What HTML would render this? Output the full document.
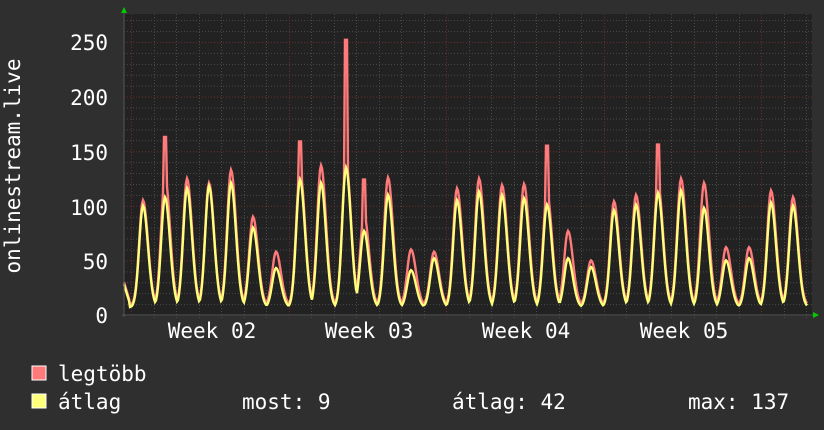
<!DOCTYPE html>
<html><head><meta charset="utf-8"><style>
html,body{margin:0;padding:0;background:#2f2f2f;width:824px;height:430px;overflow:hidden}
svg{display:block}
text{font-family:"DejaVu Sans Mono","Liberation Mono",monospace;fill:#fff}
</style></head><body>
<svg id="g" width="824" height="430" xmlns="http://www.w3.org/2000/svg">
<rect x="0" y="0" width="824" height="430" fill="#2f2f2f"/>
<rect x="124" y="14" width="688" height="302" fill="#222222"/>
<g id="grid"></g>
<g id="data"></g>
<line x1="122" y1="315" x2="814" y2="315" stroke="#555" stroke-width="1"/>
<line x1="124" y1="12" x2="124" y2="317" stroke="#555" stroke-width="1"/>
<polygon points="121,13 127,13 124,7" fill="#0c0"/>
<polygon points="813,312 813,318 819,315" fill="#0c0"/>
<g font-size="21">
<text x="108" y="50" text-anchor="end">250</text>
<text x="108" y="105" text-anchor="end">200</text>
<text x="108" y="160" text-anchor="end">150</text>
<text x="108" y="215" text-anchor="end">100</text>
<text x="108" y="269" text-anchor="end">50</text>
<text x="108" y="323" text-anchor="end">0</text>
<text x="212" y="338" text-anchor="middle">Week 02</text>
<text x="369" y="338" text-anchor="middle">Week 03</text>
<text x="526" y="338" text-anchor="middle">Week 04</text>
<text x="684" y="338" text-anchor="middle">Week 05</text>
<text transform="translate(20,166) rotate(-90)" text-anchor="middle">onlinestream.live</text>
<rect x="32" y="366" width="14" height="14" fill="#ff7b7b" stroke="#fff" stroke-width="1"/>
<rect x="32" y="394" width="14" height="14" fill="#ffff7b" stroke="#fff" stroke-width="1"/>
<text x="58" y="381">legtöbb</text>
<text x="58" y="409">átlag</text>
<text x="242" y="409">most: 9</text>
<text x="452" y="409">átlag: 42</text>
<text x="688" y="409">max: 137</text>
</g>
</svg>
<script>
(function(){
var NS="http://www.w3.org/2000/svg";
var grid=document.getElementById('grid'),data=document.getElementById('data');
function ln(x1,y1,x2,y2,c){var l=document.createElementNS(NS,'line');l.setAttribute('x1',x1);l.setAttribute('y1',y1);l.setAttribute('x2',x2);l.setAttribute('y2',y2);l.setAttribute('stroke',c);l.setAttribute('stroke-width',1);l.setAttribute('stroke-dasharray','1,2');grid.appendChild(l);}
function Y(v){return 315-v*1.092;}
for(var v=10;v<=270;v+=10){if(v%50)ln(124,Y(v)+0.5,812,Y(v)+0.5,'#4a4a4a');}
for(var x=131;x<812;x+=22.5){var d=Math.round((x-131)/22.5);if(d%7)ln(Math.round(x)+0.5,14,Math.round(x)+0.5,318,'#4a4a4a');}
for(var v=50;v<=250;v+=50)ln(124,Y(v)+0.5,812,Y(v)+0.5,'#6b2c2c');
for(var x=131;x<812;x+=157.5)ln(Math.round(x)+0.5,14,Math.round(x)+0.5,318,'#6b2c2c');
var P=[[143,100,103],[165,108,125],[187,116,123],[209,118,119],[231,121,131],[253,80,88],[276,43,56],[300,124,130],[321,121,135],[346,135,138],[364,77,90],[388,110,124],[411,41,58],[434,52,56],[457,105,114],[479,113,123],[502,110,117],[524,107,118],[547,101,110],[568,52,75],[591,44,48],[614,96,102],[636,101,108],[658,112,118],[681,114,123],[704,98,119],[726,50,60],[749,52,60],[771,103,112],[793,100,106]];
var S=[[165,161],[300,157],[346,250],[547,153],[658,154],[364,122]];
function f(x,idx){var m=7+2*Math.sin(x*0.7);for(var i=0;i<P.length;i++){var c=P[i][0],v=P[i][idx];var dx=x-c;var w=dx<0?5.4:7;var val=7+(v-7)*Math.exp(-(dx/w)*(dx/w));if(val>m)m=val;}
if(x<130){m=Math.max(m,28-(x-124)*3);}
if(idx==2){for(var j=0;j<S.length;j++){if(Math.abs(x-S[j][0])<1.2)m=Math.max(m,S[j][1]);}m+=2;}
return m;}
function path(idx,col){var d='';for(var x=124;x<=807;x+=1){d+=(x==124?'M':'L')+x+','+Y(f(x,idx)).toFixed(1);}
var p=document.createElementNS(NS,'path');p.setAttribute('d',d);p.setAttribute('fill','none');p.setAttribute('stroke',col);p.setAttribute('stroke-width',2.4);p.setAttribute('stroke-linejoin','miter');data.appendChild(p);}
path(2,'#ff7b7b');path(1,'#ffff7b');
})();
</script>
</body></html>
